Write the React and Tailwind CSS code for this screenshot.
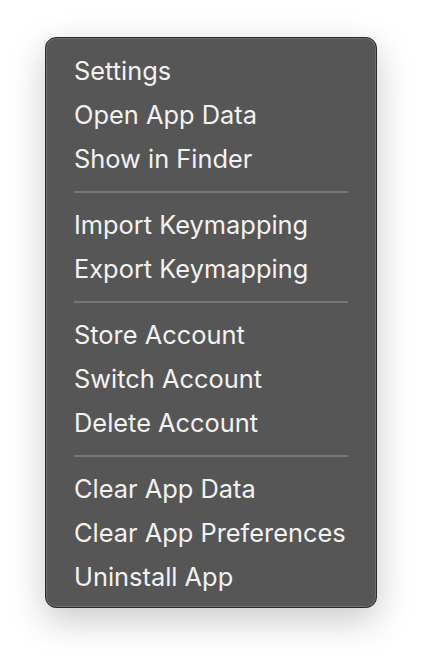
import React from "react";

const groups = [
  ["Settings", "Open App Data", "Show in Finder"],
  ["Import Keymapping", "Export Keymapping"],
  ["Store Account", "Switch Account", "Delete Account"],
  ["Clear App Data", "Clear App Preferences", "Uninstall App"],
];

export default function App() {
  return (
    <div className="w-[422px] h-[662px] bg-white pt-[37px] pl-[45px]" style={{ fontFamily: "Inter, 'Noto Sans', sans-serif" }}>
      <div className="w-[332px] h-[571px] rounded-[11px] bg-[#565656] border border-[#2a2a2a] shadow-[0_12px_36px_rgba(0,0,0,0.22),inset_0_0_0_1px_#6e6e6e] pt-[11px] pb-[8px] pl-[28px] pr-[10px]">
        {groups.map((g, gi) => (
          <div key={gi}>
            {gi > 0 && (
              <div className="h-[22px] flex items-center">
                <div className="h-[2px] w-[274px] bg-[#777777]" />
              </div>
            )}
            {g.map((t) => (
              <div key={t} className="h-[44px] flex items-center text-[25.4px] leading-none text-[#f2f2f2] whitespace-nowrap">
                {t}
              </div>
            ))}
          </div>
        ))}
      </div>
    </div>
  );
}
